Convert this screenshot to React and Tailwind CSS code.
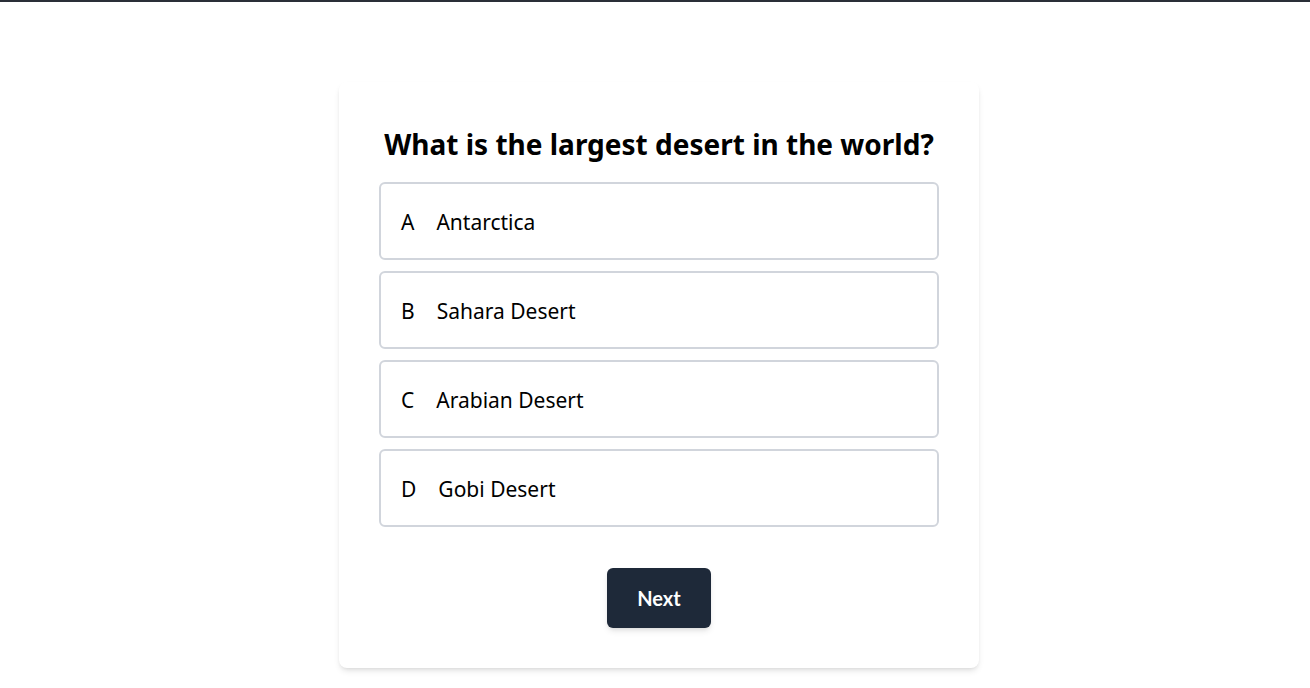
import React from "react";

const options = [
  { letter: "A", text: "Antarctica" },
  { letter: "B", text: "Sahara Desert" },
  { letter: "C", text: "Arabian Desert" },
  { letter: "D", text: "Gobi Desert" },
];

export default function App() {
  return (
    <div className="min-h-screen bg-white font-['Noto_Sans',sans-serif] text-black">
      <div className="h-0.5 bg-[#2a2f38]" />
      <div className="mt-20 pl-2 flex justify-center">
        <div className="w-[640px] bg-white rounded-lg shadow-md p-10 flex flex-col">
          <h1 className="text-center text-[28px] leading-9 font-bold pt-1 mb-5">
            What is the largest desert in the world?
          </h1>
          <div className="flex flex-col gap-[11px]">
            {options.map((o) => (
              <button
                key={o.letter}
                className="h-[78px] flex items-center px-5 pt-1 border-2 border-gray-300 rounded-md text-[21px] text-left bg-white"
              >
                <span className="mr-[22px]">{o.letter}</span>
                <span>{o.text}</span>
              </button>
            ))}
          </div>
          <div className="mt-[41px] flex justify-center">
            <button className="h-[60px] px-[30px] bg-gray-800 text-white rounded-md shadow-md font-['Lato',sans-serif] font-bold text-xl">
              Next
            </button>
          </div>
        </div>
      </div>
    </div>
  );
}
